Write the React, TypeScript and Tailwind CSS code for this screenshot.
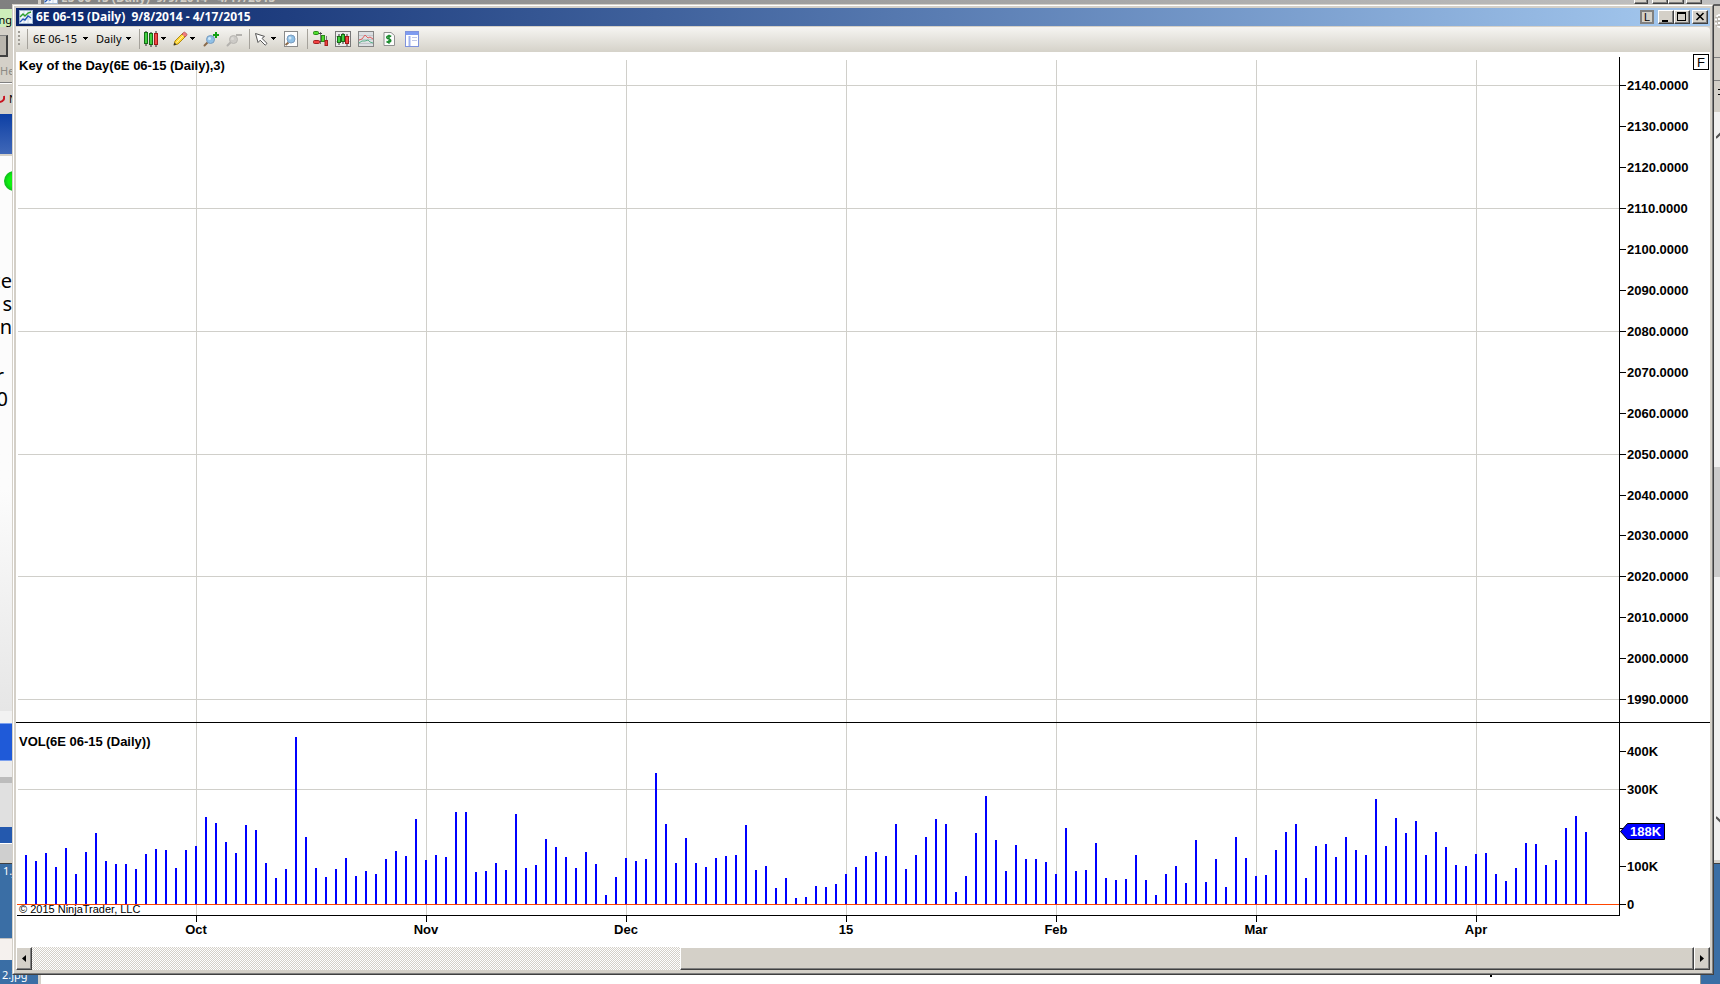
import type { ReactNode } from "react";

const PLOT_WIDTH = 1603;
const PRICE_HEIGHT = 670;

const months = [
  { label: "Oct", x: 180 },
  { label: "Nov", x: 410 },
  { label: "Dec", x: 610 },
  { label: "15", x: 830 },
  { label: "Feb", x: 1040 },
  { label: "Mar", x: 1240 },
  { label: "Apr", x: 1460 },
];

const prices = Array.from({ length: 16 }, (_, i) => ({
  label: `${2140 - i * 10}.0000`,
  y: Math.round(33.3 + i * 40.92),
  grid: i % 3 === 0,
}));

const volumeLabels = [
  { label: "400K", y: 28 },
  { label: "300K", y: 66 },
  { label: "", y: 105 },
  { label: "100K", y: 143 },
  { label: "0", y: 181 },
];

// bar heights, one per session
const volumes = [
  49, 43, 51, 37, 56, 30, 52, 71, 43, 40, 40, 35, 50, 55, 54, 36, 54, 58, 87, 81, 62, 51, 79, 74,
  41, 26, 35, 167, 67, 36, 27, 35, 46, 28, 33, 30, 45, 53, 48, 85, 44, 49, 47, 92, 92, 32, 33, 41,
  34, 90, 36, 39, 65, 57, 47, 36, 52, 40, 9, 27, 46, 43, 45, 131, 80, 41, 66, 41, 37, 46, 48, 49,
  79, 34, 38, 16, 26, 6, 7, 18, 17, 20, 30, 37, 48, 52, 48, 80, 35, 49, 67, 85, 80, 12, 28, 71,
  108, 64, 33, 59, 45, 45, 42, 30, 76, 33, 34, 61, 26, 24, 25, 49, 24, 9, 30, 38, 21, 64, 22, 45,
  17, 67, 46, 28, 29, 54, 72, 80, 26, 58, 60, 47, 67, 54, 49, 105, 58, 86, 71, 83, 49, 72, 57, 39,
  38, 50, 51, 30, 23, 36, 61, 60, 39, 44, 76, 88, 72,
];

const px = (x: number) => `${(x / PLOT_WIDTH) * 100}%`;
const py = (y: number) => `${(y / PRICE_HEIGHT) * 100}%`;

const chartText = "font-['Liberation_Sans',Arial,sans-serif] text-[13px] font-bold";
const raised =
  "border border-t-white border-l-white border-r-[#404040] border-b-[#404040] bg-[#d4d0c8] shadow-[inset_-1px_-1px_0_#808080]";

function Caret() {
  return (
    <svg className="h-[3px] w-[5px] shrink-0" viewBox="0 0 5 3" shapeRendering="crispEdges">
      <path d="M0 0h5v1h-1v1h-1v1h-1v-1h-1v-1h-1z" fill="#000" />
    </svg>
  );
}

function Separator() {
  return <div className="h-5 w-px shrink-0 bg-[#a5a29b]" />;
}

function Tool({ label, children, className = "" }: { label: string; children: ReactNode; className?: string }) {
  return (
    <button type="button" aria-label={label} className={`shrink-0 ${className}`}>
      <svg className="block size-4" viewBox="0 0 16 16" fill="none">
        {children}
      </svg>
    </button>
  );
}

function ChartIcon() {
  return (
    <svg className="size-[14px] shrink-0" viewBox="0 0 14 14" fill="none">
      <rect x="0.5" y="0.5" width="13" height="13" fill="#f4f8fc" stroke="#9fb6d0" />
      <path d="M1 5h12M1 9h12M5 1v12M9 1v12" stroke="#c8d8ea" />
      <path d="M1 7l3-3 2 2 3-3 3-1" stroke="#2aa02a" strokeWidth="1.4" />
      <path d="M1 12l3-3 2 1 3-4 3 2" stroke="#2458b8" strokeWidth="1.4" />
    </svg>
  );
}

function Magnifier({ gray = false }: { gray?: boolean }) {
  return (
    <>
      <path d="M5 11l-3.500 3.500" stroke={gray ? "#b4b2ae" : "#8a6a4a"} strokeWidth="2" strokeLinecap="round" />
      <circle cx="7.500" cy="8.500" r="4" fill={gray ? "#cccac6" : "#8fc0e6"} stroke={gray ? "#b8b6b2" : "#7a9cc0"} />
      <circle cx="6.500" cy="7.500" r="1.500" fill={gray ? "#dcdad6" : "#d0e8fa"} />
    </>
  );
}

function TitleBar() {
  return (
    <header className="flex h-[18px] items-center bg-linear-to-r from-[#0a246a] to-[#a6caf0] pr-[2px] pl-[3px]">
      <ChartIcon />
      <h1 className="ml-[3px] flex-1 font-['Noto_Sans',Tahoma,sans-serif] text-[12px] leading-4 font-bold whitespace-pre text-white">
        6E 06-15 (Daily)  9/8/2014 - 4/17/2015
      </h1>
      <button
        type="button"
        aria-label="Link"
        className="flex h-[14px] w-[14px] items-center justify-center border-2 border-[#808080] bg-[#d4d0c8] font-['Liberation_Sans',Arial,sans-serif] text-[11px] leading-none text-black"
      >
        L
      </button>
      <button type="button" aria-label="Minimize" className={`ml-1 h-[14px] w-4 ${raised}`}>
        <svg className="block h-3 w-[14px]" viewBox="0 0 14 12" shapeRendering="crispEdges">
          <rect x="3" y="9" width="6" height="2" />
        </svg>
      </button>
      <button type="button" aria-label="Maximize" className={`h-[14px] w-4 ${raised}`}>
        <svg className="block h-3 w-[14px]" viewBox="0 0 14 12" shapeRendering="crispEdges">
          <path d="M2 1h9v9h-9zM3 3v6h7v-6z" fillRule="evenodd" />
        </svg>
      </button>
      <button type="button" aria-label="Close" className={`ml-[2px] h-[14px] w-4 ${raised}`}>
        <svg className="block h-3 w-[14px]" viewBox="0 0 14 12">
          <path d="M3.500 2l7 7M10.500 2l-7 7" stroke="#000" strokeWidth="1.600" />
        </svg>
      </button>
    </header>
  );
}

function Toolbar() {
  const select =
    "shrink-0 appearance-none bg-transparent font-['Noto_Sans',Tahoma,sans-serif] text-[11px] leading-4 text-black";
  return (
    <nav className="flex h-[26px] items-center rounded-r-sm border-t border-[#d4d0c8] bg-linear-to-b from-[#f6f5f2] to-[#d5d2c9] pb-[2px] pl-[2px]">
      <div className="h-4 w-[2px] shrink-0 bg-[repeating-linear-gradient(#a09d96_0_2px,transparent_2px_4px)]" />
      <div className="ml-[7px]">
        <Separator />
      </div>
      <select aria-label="Instrument" className={`${select} ml-[5px] w-[46px]`}>
        <option>6E 06-15</option>
      </select>
      <span className="ml-1">
        <Caret />
      </span>
      <select aria-label="Interval" className={`${select} ml-2 w-[26px]`}>
        <option>Daily</option>
      </select>
      <span className="mr-2 ml-1">
        <Caret />
      </span>
      <Separator />
      <Tool label="Chart style" className="mr-[2px] ml-[3px]">
        <path d="M3 0v15M8 1v15M13 0v16" stroke="#222" />
        <rect x="1.500" y="1.500" width="3" height="11" fill="#3fd03f" stroke="#176b17" />
        <rect x="6.500" y="2.500" width="3" height="11" fill="#3fd03f" stroke="#176b17" />
        <rect x="11.500" y="2.500" width="3" height="11" fill="#f04848" stroke="#a01818" />
      </Tool>
      <Caret />
      <Tool label="Drawing tools" className="mr-[2px] ml-[6px]">
        <path d="M2 14l1-4 8-8 3 3-8 8z" fill="#ffd83a" stroke="#b08a10" />
        <path d="M10 3l1.500-1.500q1-.8 2 .2l1 1q1 1 0 2L13 6z" fill="#f07a7a" stroke="#b05050" strokeWidth="0.800" />
        <path d="M1.500 14.500l1-3 2 2z" fill="#333" />
        <path d="M4.500 11.500l7-7" stroke="#fff0a0" />
      </Tool>
      <Caret />
      <Tool label="Zoom in" className="ml-2">
        <Magnifier />
        <path d="M13 1v6M10 4h6" stroke="#12a012" strokeWidth="2" />
      </Tool>
      <Tool label="Zoom out" className="mr-[7px] ml-[7px]">
        <Magnifier gray />
        <path d="M10 4h6" stroke="#b4b2ae" strokeWidth="2" />
      </Tool>
      <Separator />
      <Tool label="Cursor" className="ml-1">
        <path d="M1.500 2.500l2.500 9 2.200-2.300 5 5 1.800-1.800-5-5 2.500-2z" fill="#fff" stroke="#555" />
      </Tool>
      <span className="mr-[7px] ml-px">
        <Caret />
      </span>
      <Tool label="Zoom frame" className="mr-2">
        <rect x="1.500" y="0.500" width="13" height="15" fill="#fdfdfd" stroke="#8a8a8a" />
        <path d="M5.500 11.500l-3 2.500" stroke="#8a6a4a" strokeWidth="2" />
        <circle cx="8" cy="8" r="4" fill="#8fc0e6" stroke="#7a9cc0" />
        <circle cx="7" cy="7" r="1.500" fill="#d0e8fa" />
      </Tool>
      <Separator />
      <div className="ml-1 flex gap-[7px]">
        <Tool label="Chart trader">
          <path d="M8.500 1v12M14.500 5v10" stroke="#777" />
          <path d="M6 2.500h4M6 10.500h4" stroke="#444" />
          <rect x="1.500" y="0.500" width="5" height="3" rx="1" fill="#4fdc2f" stroke="#2a8a1a" />
          <rect x="1.500" y="9.500" width="6" height="3" rx="1" fill="#f04040" stroke="#a02020" />
          <rect x="9.500" y="4.500" width="3" height="6" fill="#4fdc2f" stroke="#2a8a1a" />
          <rect x="13" y="9.500" width="2.500" height="5" fill="#f04040" stroke="#a02020" />
        </Tool>
        <Tool label="Data series">
          <rect x="0.500" y="0.500" width="15" height="15" fill="#ececec" stroke="#777" />
          <path d="M1 5.500h14M1 10.500h14" stroke="#c4c4c4" />
          <path d="M4 3v11M8 2v11M12 3v12" stroke="#333" />
          <rect x="2.500" y="5.500" width="3" height="6" fill="#3fd03f" stroke="#176b17" />
          <rect x="6.500" y="3.500" width="3" height="7" fill="#3fd03f" stroke="#176b17" />
          <rect x="10.500" y="5.500" width="3" height="7" fill="#f04848" stroke="#a01818" />
        </Tool>
        <Tool label="Indicators">
          <rect x="0.500" y="0.500" width="15" height="15" fill="#dcdfe2" stroke="#858585" />
          <path d="M1 4.500h14M1 8.500h14M1 12.500h14" stroke="#c2c6ca" />
          <path d="M1 9l3-1 3-4 3 3 2-1 3 2" stroke="#e06060" />
          <path d="M1 12l3-2 3 0 3-1 2 2 3 1" stroke="#58b088" />
        </Tool>
        <Tool label="Strategies">
          <path d="M3 1.500h7l3.500 3v10h-10.500z" fill="#fcfcfc" stroke="#909090" />
          <path
            d="M10.200 5.500q-2-1.200-3.600-.4t-.3 2.200l2.600 1q1.600 1.200.3 2.400t-3.700-.2M8 3.800v9"
            stroke="#178a2a"
            strokeWidth="1.500"
          />
        </Tool>
        <Tool label="Properties">
          <rect x="1.500" y="0.500" width="13" height="15" fill="#fff" stroke="#7f93dc" />
          <rect x="2" y="1" width="12" height="3" fill="#7f9cf0" />
          <path d="M5.500 5v10" stroke="#9fb2ee" strokeWidth="2" />
          <path d="M8 6.500h5M8 9.500h5" stroke="#c0c8e8" />
        </Tool>
      </div>
    </nav>
  );
}

function PricePanel() {
  return (
    <section className="flex min-h-0 flex-1" aria-label="Price">
      <svg className="h-full min-w-0 flex-1" shapeRendering="crispEdges">
        {months.map((m) => (
          <rect key={m.label} x={px(m.x)} y="8" width="1" height="100%" fill="#d0cfca" />
        ))}
        {prices
          .filter((p) => p.grid)
          .map((p) => (
            <rect key={p.label} x="2" y={py(p.y)} width="100%" height="1" fill="#d0cfca" />
          ))}
        <text x="3" y="18" className={chartText}>
          Key of the Day(6E 06-15 (Daily),3)
        </text>
      </svg>
      <div className="relative w-[91px] shrink-0">
        <svg className="block h-full w-full" shapeRendering="crispEdges">
          <rect x="0" y="5" width="1" height="100%" />
          {prices.map((p) => (
            <g key={p.label}>
              <rect x="1" y={py(p.y)} width="6" height="1" />
              <text x="8" y={py(p.y + 5)} className={chartText}>
                {p.label}
              </text>
            </g>
          ))}
        </svg>
        <button
          type="button"
          className="absolute top-[2px] right-px flex size-4 items-center justify-center border border-black bg-white font-['Liberation_Sans',Arial,sans-serif] text-[13px] leading-none text-black"
        >
          F
        </button>
      </div>
    </section>
  );
}

function VolumePanel() {
  return (
    <section className="flex h-[193px] shrink-0" aria-label="Volume">
      <svg className="h-full min-w-0 flex-1" shapeRendering="crispEdges">
        {months.map((m) => (
          <rect key={m.label} x={px(m.x)} y="0" width="1" height="192" fill="#d0cfca" />
        ))}
        <rect x="2" y="66" width="100%" height="1" fill="#d0cfca" />
        {volumes.map((v, i) => (
          <rect key={i} x={px(9 + i * 10)} y={181 - v} width="2" height={v} fill="#0000ff" />
        ))}
        <rect x="1" y="181" width="100%" height="1" fill="#ff4500" />
        <rect x="1" y="192" width="100%" height="1" />
        <text x="3" y="23" className={chartText}>
          VOL(6E 06-15 (Daily))
        </text>
        <text x="3" y="190" className="font-['Liberation_Sans',Arial,sans-serif] text-[11px]">
          © 2015 NinjaTrader, LLC
        </text>
      </svg>
      <svg className="h-full w-[91px] shrink-0" shapeRendering="crispEdges">
        <rect x="0" y="0" width="1" height="193" />
        {volumeLabels.map((v) => (
          <g key={v.y}>
            <rect x="1" y={v.y} width="6" height="1" />
            <text x="8" y={v.y + 5} className={chartText}>
              {v.label}
            </text>
          </g>
        ))}
        <path d="M1.500 108.500l7-8h37v16h-37z" fill="#0000ff" stroke="#000" shapeRendering="auto" />
        <text x="11" y="113" fill="#fff" className={chartText}>
          188K
        </text>
      </svg>
    </section>
  );
}

function TimeAxis() {
  return (
    <div className="flex h-[31px] shrink-0">
      <svg className="h-full min-w-0 flex-1" shapeRendering="crispEdges">
        {months.map((m) => (
          <g key={m.label}>
            <rect x={px(m.x)} y="0" width="1" height="6" />
            <text x={px(m.x)} y="18" textAnchor="middle" className={chartText}>
              {m.label}
            </text>
          </g>
        ))}
      </svg>
      <div className="w-[91px] shrink-0" />
    </div>
  );
}

function ScrollBar() {
  const arrow = `flex w-4 shrink-0 items-center justify-center ${raised}`;
  return (
    <div className="flex h-[23px] shrink-0 bg-[repeating-conic-gradient(#ffffff_0_25%,#d4d0c8_0_50%)] bg-[length:2px_2px]">
      <button type="button" aria-label="Scroll left" className={arrow}>
        <svg className="h-[7px] w-1" viewBox="0 0 4 7">
          <path d="M4 0v7l-4-3.500z" />
        </svg>
      </button>
      <div className="grow-[649] basis-0" />
      <div className={`grow-[1013] basis-0 ${raised}`} />
      <button type="button" aria-label="Scroll right" className={arrow}>
        <svg className="h-[7px] w-1" viewBox="0 0 4 7">
          <path d="M0 0v7l4-3.500z" />
        </svg>
      </button>
    </div>
  );
}

function ChartWindow() {
  return (
    <main className="z-10 col-start-1 row-start-1 mt-1 mr-[6px] mb-[9px] ml-3 flex min-w-0 border border-t-[#d4d0c8] border-r-[#404040] border-b-[#404040] border-l-[#d4d0c8]">
      <div className="flex min-w-0 flex-1 flex-col border border-t-white border-r-[#808080] border-b-[#808080] border-l-white bg-[#d4d0c8] p-[2px] pb-[3px]">
        <TitleBar />
        <Toolbar />
        <div className="flex min-h-0 flex-1 flex-col bg-white">
          <PricePanel />
          <div className="h-px shrink-0 bg-black" />
          <VolumePanel />
          <TimeAxis />
          <ScrollBar />
        </div>
      </div>
    </main>
  );
}

// slices of the programs that stay visible around the chart window
function LeftDesktop() {
  const slice = "flex w-3 shrink-0 items-center justify-end overflow-hidden whitespace-nowrap";
  const page = `${slice} h-[23px] text-[20px] leading-none text-black`;
  return (
    <div className="flex w-[38px] shrink-0 flex-col bg-[#d4d0c8] font-['Noto_Sans',Tahoma,sans-serif] text-[11px] text-black">
      <div className="h-[5px] shrink-0 bg-[#808080]" />
      <div className={`${slice} h-[18px] bg-[#cdeebb] pt-1`}>ng</div>
      <div className="mt-2 h-[22px] w-2 shrink-0 border-t border-r-2 border-b-2 border-t-[#808080] border-r-[#404040] border-b-[#404040] bg-[#bab6ae]" />
      <div className={`${slice} mt-1 h-[22px] justify-start border-b border-[#808080] text-[#8c8a85]`}>He</div>
      <div className={`${slice} h-[31px] justify-start gap-1 border-t border-white`}>
        <svg className="h-2 w-[5px] shrink-0" viewBox="0 0 5 8" fill="none">
          <path d="M0 7q5-1 4-6" stroke="#c81420" strokeWidth="2" />
        </svg>
        N
      </div>
      <div className="h-10 shrink-0 bg-linear-to-b from-[#0b3fa4] to-[#4068b8]" />
      <div className="flex flex-1 flex-col border-t-2 border-[#d4d0c8] bg-linear-to-b from-[#fcfcfc] from-60% to-[#e6e6e6]">
        <div className={`${slice} mt-[13px] h-[23px] justify-start`}>
          <div className="ml-[4px] size-[20px] shrink-0 rounded-full bg-radial from-[#10f010] from-40% to-[#0b8f1b]" />
        </div>
        <div className={`${page} mt-[77px]`}>ce</div>
        <div className={page}>s</div>
        <div className={page}>n</div>
        <div className={`${page} mt-[26px] pr-2`}>r</div>
        <div className={`${page} pr-1`}>0</div>
      </div>
      <div className="h-3 shrink-0 bg-[#f2f2f2]" />
      <div className="h-[38px] shrink-0 border-y border-[#7ba0ee] bg-[#1f5ad8]" />
      <div className="h-4 shrink-0 bg-[#ececec]" />
      <div className="h-[6px] shrink-0 bg-[#bcbcbc]" />
      <div className="h-11 shrink-0 bg-[#e0e0e0]" />
      <div className="h-4 shrink-0 bg-[#2459ae]" />
      <div className="h-[17px] shrink-0 border-t border-white bg-[#cfcfcf]" />
      <div className="h-1 shrink-0 border-b border-[#404040] bg-[#d4d0c8]" />
      <div className="h-[74px] shrink-0 bg-[#3a6ea5] pt-px pl-[3px] leading-3 text-white">1.jpg</div>
      <div className="h-[22px] shrink-0 border-t border-[#c0c0c0] bg-[#f5f1ee]" />
      <div className="h-6 shrink-0 bg-[#3a6ea5] pt-[9px] pl-[2px] leading-3 text-white">2.jpg</div>
    </div>
  );
}

function RightDesktop() {
  return (
    <div className="flex w-5 shrink-0 flex-col border-l border-[#9a978f] bg-[#f0f0f0]">
      <div className="flex h-[108px] shrink-0 flex-col items-end bg-[#d4d0c8]">
        <div className="h-[10px] w-full border-t-2 border-[#606060]" />
        <div className="h-[14px] w-[5px] rounded-l-full border-2 border-dotted border-white bg-[#b8b4ac]" />
        <div className="mt-[29px] h-6 w-full border-y border-[#808080]" />
        <div className="mt-2 flex h-[6px] w-[2px] flex-col justify-between">
          <div className="h-px bg-black" />
          <div className="h-px bg-black" />
        </div>
      </div>
      <div className="flex flex-1 flex-col items-end pt-5 pb-9">
        <svg className="h-2 w-1 shrink-0" viewBox="0 0 4 8" fill="none">
          <path d="M0 6l5-5" stroke="#505050" strokeWidth="2" />
        </svg>
        <div className="grow-[328] basis-0" />
        <div className="h-[110px] w-full shrink-0 bg-[#cbcbcb]" />
        <div className="grow-[239] basis-0" />
        <svg className="h-2 w-1 shrink-0" viewBox="0 0 4 8" fill="none">
          <path d="M0 1l5 5" stroke="#505050" strokeWidth="2" />
        </svg>
      </div>
      <div className="h-1 shrink-0 border-b border-[#404040] bg-[#d4d0c8]" />
      <div className="h-[120px] shrink-0 bg-[#3a6ea5]" />
    </div>
  );
}

export default function App() {
  return (
    <div className="grid min-h-screen grid-cols-1 overflow-hidden bg-[#3a6ea5]">
      <div className="col-start-1 row-start-1 flex min-w-0 flex-col">
        <div className="flex h-1 shrink-0 items-end overflow-hidden bg-linear-to-r from-[#808080] to-[#c0c0c0]">
          <div className="ml-[38px] h-1 w-[3px] shrink-0 bg-[#d4d0c8]" />
          <div className="ml-[3px]">
            <ChartIcon />
          </div>
          <p className="ml-[3px] flex-1 font-['Noto_Sans',Tahoma,sans-serif] text-[12px] leading-3 font-bold whitespace-pre text-[#d4d0c8]">
            ES 06-15 (Daily)  9/9/2014 - 4/17/2015
          </p>
          <div className={`h-[14px] w-[14px] ${raised}`} />
          <div className={`ml-1 h-[14px] w-4 ${raised}`} />
          <div className={`h-[14px] w-4 ${raised}`} />
          <div className={`mr-[18px] ml-[2px] h-[14px] w-4 ${raised}`} />
        </div>
        <div className="flex min-h-0 flex-1">
          <LeftDesktop />
          <div className="w-[3px] shrink-0 bg-[#d4d0c8]" />
          <div className="flex min-w-0 flex-1 flex-col items-end justify-end bg-white">
            <div className="mr-[208px] mb-[7px] h-[3px] w-[2px] bg-black" />
          </div>
          <RightDesktop />
        </div>
      </div>
      <ChartWindow />
    </div>
  );
}
